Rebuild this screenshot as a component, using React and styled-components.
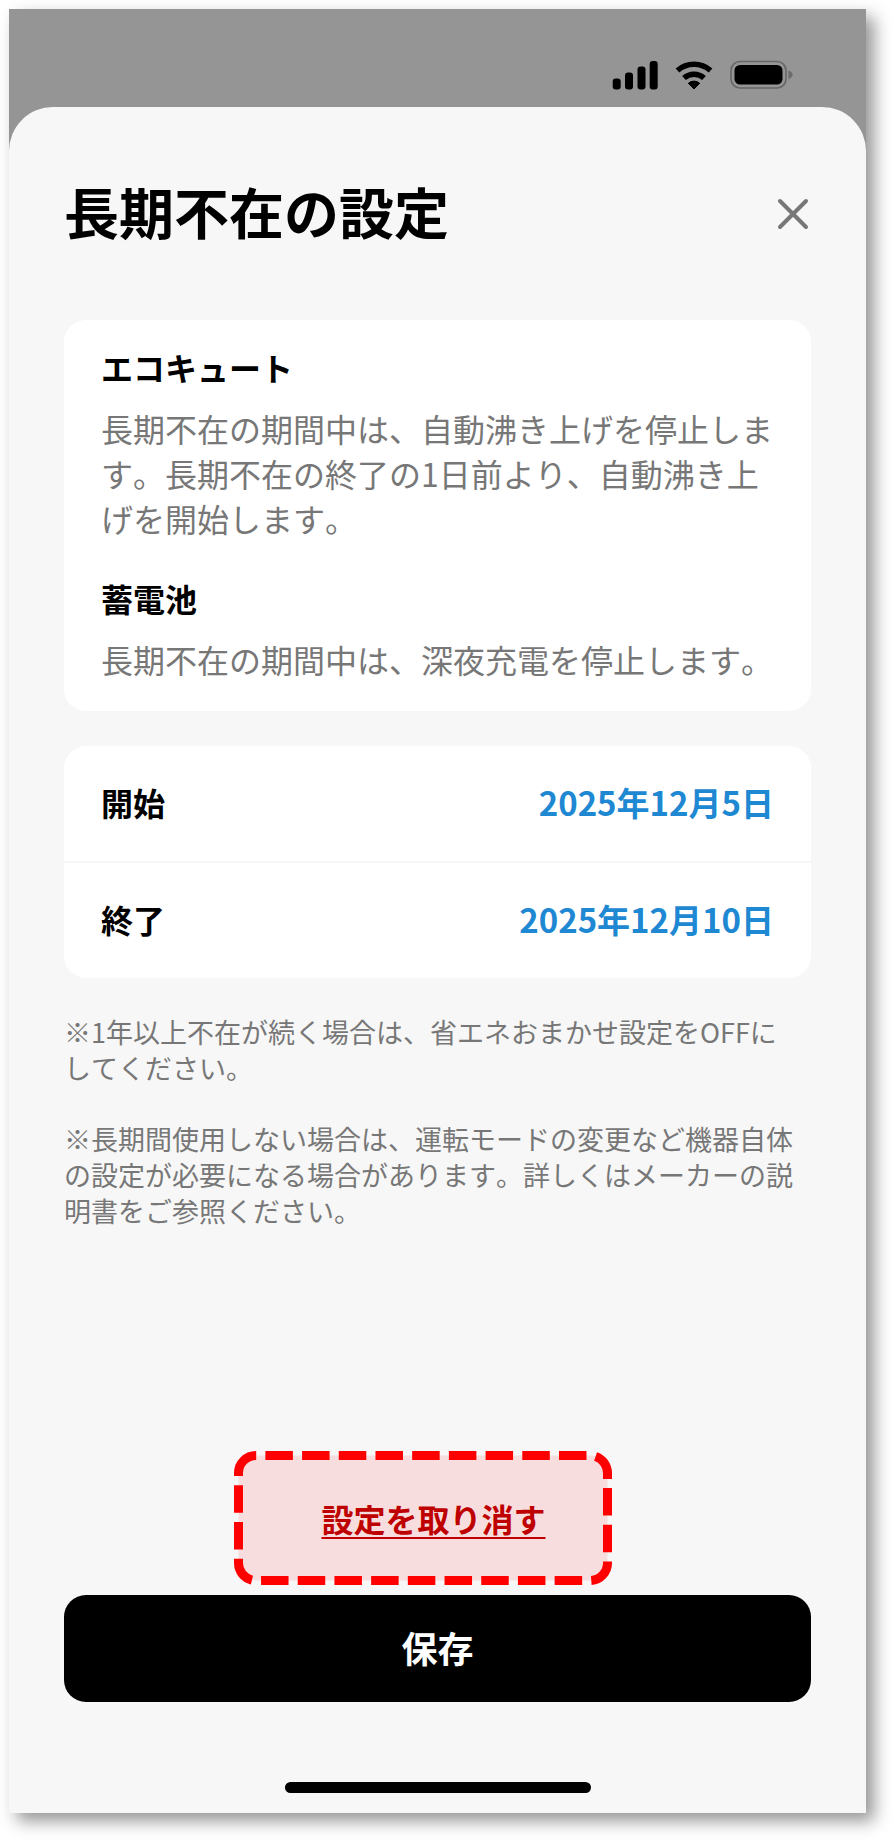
import React from 'react'
import styled, { createGlobalStyle } from 'styled-components'

const App = () => {
  return (
    <Page>
      <GlobalStyle />
      <Phone>
        <StatusBar>
          <SignalIcon />
          <WifiIcon />
          <BatteryIcon />
        </StatusBar>
        <Sheet>
          <Header>
            <Title>長期不在の設定</Title>
            <CloseButton type="button" aria-label="閉じる">
              <svg width="36" height="36" viewBox="0 0 36 36" fill="none" stroke="#777" strokeWidth="4" strokeLinecap="round">
                <path d="M5 5 L31 31 M31 5 L5 31" />
              </svg>
            </CloseButton>
          </Header>

          <InfoCard>
            <InfoTitle>エコキュート</InfoTitle>
            <InfoText>
              長期不在の期間中は、自動沸き上げを停止します。長期不在の終了の1日前より、自動沸き上げを開始します。
            </InfoText>
            <InfoTitle>蓄電池</InfoTitle>
            <InfoText>長期不在の期間中は、深夜充電を停止します。</InfoText>
          </InfoCard>

          <DateCard>
            <DateRow>
              <DateLabel id="start-label">開始</DateLabel>
              <DateButton type="button" id="start-date" aria-labelledby="start-label start-date">2025年12月5日</DateButton>
            </DateRow>
            <DateRow>
              <DateLabel id="end-label">終了</DateLabel>
              <DateButton type="button" id="end-date" aria-labelledby="end-label end-date">2025年12月10日</DateButton>
            </DateRow>
          </DateCard>

          <Notes>
            <Note>
              ※1年以上不在が続く場合は、省エネおまかせ設定をOFFに<br />
              してください。
            </Note>
            <Note>
              ※長期間使用しない場合は、運転モードの変更など機器自体の設定が必要になる場合があります。詳しくはメーカーの説明書をご参照ください。
            </Note>
          </Notes>

          <Footer>
            <CancelArea>
              <CancelButton type="button">
                設定を取り消す
                <Highlight width="378" height="134" viewBox="0 0 378 134" aria-hidden="true">
                  <path
                    d="M4.5 22 a17.5 17.5 0 0 1 17.5 -17.5 H356 a17.5 17.5 0 0 1 17.5 17.5 V112 a17.5 17.5 0 0 1 -17.5 17.5 H22 a17.5 17.5 0 0 1 -17.5 -17.5 Z"
                    fill="rgba(255, 0, 0, 0.1)"
                    stroke="#ff0000"
                    strokeWidth="9"
                    strokeDasharray="27.5 9.2"
                  />
                </Highlight>
              </CancelButton>
            </CancelArea>
            <SaveButton type="button">保存</SaveButton>
            <HomeIndicator />
          </Footer>
        </Sheet>
      </Phone>
    </Page>
  )
}

const SignalIcon = () => (
  <svg width="46" height="30" viewBox="0 0 46 30">
    <rect x="0.7" y="18.5" width="8" height="11" rx="3" />
    <rect x="13" y="12.5" width="8" height="17" rx="3" />
    <rect x="25.5" y="6.5" width="8" height="23" rx="3" />
    <rect x="37.7" y="1" width="8" height="28.5" rx="3" />
  </svg>
)

const WifiIcon = () => (
  <svg width="40" height="30" viewBox="0 0 40 30">
    <path d="M3.5 10.5 A25 25 0 0 1 36.5 10.5" fill="none" stroke="#000" strokeWidth="5.6" />
    <path d="M10 18 A15 15 0 0 1 30 18" fill="none" stroke="#000" strokeWidth="5.6" />
    <path d="M20 29 L14.3 23.3 A8.5 8.5 0 0 1 25.7 23.3 Z" strokeLinejoin="round" stroke="#000" strokeWidth="1" />
  </svg>
)

const BatteryIcon = () => (
  <svg width="64" height="30" viewBox="0 0 64 30">
    <rect x="1" y="1.5" width="55" height="26.5" rx="9" fill="none" stroke="#666" strokeWidth="1.6" />
    <rect x="4.5" y="5" width="48" height="19.5" rx="5.5" />
    <path d="M58.5 10.5 C64 12.5 64 17 58.5 19 Z" fill="#6b6b6b" />
  </svg>
)

const GlobalStyle = createGlobalStyle`
body {
  margin: 0;
  background: #fff;
  font-family: "Noto Sans CJK JP", sans-serif;
  font-kerning: none;
}

*, *::before, *::after {
  box-sizing: border-box;
}

button {
  padding: 0;
  border: 0;
  background: none;
  font-family: inherit;
  cursor: pointer;
}
`

const Page = styled.div`
display: flex;
min-height: 100vh;
padding: 9px 29px 29px 9px;
`

const Phone = styled.div`
flex: 1;
min-width: 0;
display: flex;
flex-direction: column;
background: #959595;
box-shadow: 8px 8px 16px rgba(0, 0, 0, 0.42);
`

const StatusBar = styled.div`
display: flex;
justify-content: flex-end;
align-items: flex-end;
gap: 16px;
height: 98px;
padding: 0 72px 17px;

svg {
  display: block;
}
`

const Sheet = styled.main`
flex: 1;
display: flex;
flex-direction: column;
padding: 67px 55px 20px;
border-radius: 44px 44px 0 0;
background: #f7f7f7;
`

const Header = styled.header`
display: flex;
justify-content: space-between;
align-items: center;
margin-bottom: 66px;
`

const Title = styled.h1`
margin: 0;
padding-bottom: 8px;
font-size: 55px;
line-height: 72px;
font-weight: 700;
color: #000;
`

const CloseButton = styled.button`
width: 36px;
height: 36px;

svg {
  display: block;
}
`

const Card = styled.section`
border-radius: 22px;
background: #fff;
`

const InfoCard = styled(Card)`
padding: 25px 37px 29px;
margin-bottom: 35px;
`

const InfoTitle = styled.h2`
margin: 0 0 17px;
font-size: 32px;
line-height: 44px;
font-weight: 700;
color: #000;
`

const InfoText = styled.p`
margin: 0;
font-size: 32px;
line-height: 45px;
color: #777;

& + ${InfoTitle} {
  margin-top: 35px;
}
`

const DateCard = styled(Card)`
margin-bottom: 36px;
`

const DateRow = styled.div`
display: flex;
justify-content: space-between;
align-items: center;
padding: 34px 37px 37px;

& + & {
  border-top: 2px solid #f7f7f7;
}
`

const DateLabel = styled.span`
font-size: 32px;
line-height: 44px;
font-weight: 700;
color: #000;
`

const DateButton = styled.button`
font-size: 33px;
line-height: 44px;
font-weight: 700;
color: #1e88d2;
`

const Notes = styled.div`
display: flex;
flex-direction: column;
gap: 35px;
`

const Note = styled.p`
margin: 0;
font-size: 27px;
line-height: 36px;
color: #777;
`

const Footer = styled.footer`
display: flex;
flex-direction: column;
margin-top: auto;
padding-top: 53px;
`

const CancelArea = styled.div`
display: flex;
justify-content: center;
padding-right: 8px;
margin-bottom: 55px;
`

const CancelButton = styled.button`
position: relative;
font-size: 32px;
line-height: 44px;
font-weight: 700;
color: #b80000;
text-decoration: underline;
text-decoration-thickness: 2px;
text-underline-offset: 5px;
`

const Highlight = styled.svg`
position: absolute;
top: -45px;
left: -87px;
pointer-events: none;
`

const SaveButton = styled.button`
width: 100%;
height: 107px;
padding-bottom: 4px;
border-radius: 22px;
background: #000;
color: #fff;
font-size: 36px;
font-weight: 700;
`

const HomeIndicator = styled.div`
align-self: center;
width: 306px;
height: 11px;
margin-top: 80px;
border-radius: 6px;
background: #000;
`

export default App
